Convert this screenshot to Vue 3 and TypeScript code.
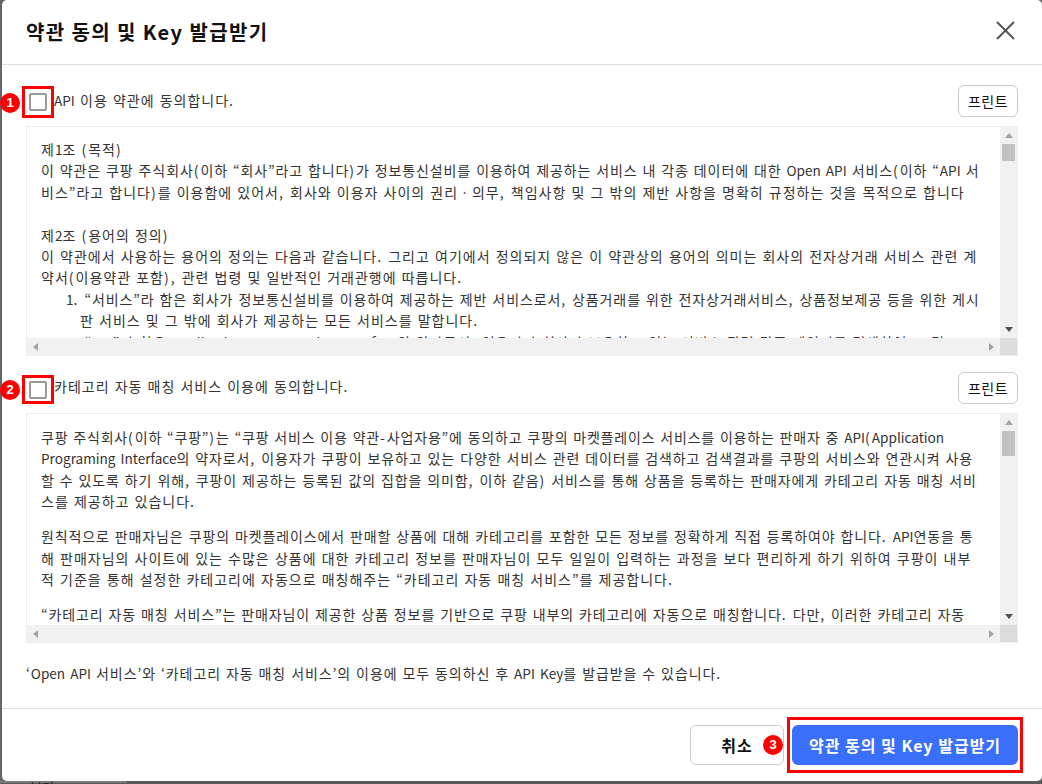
<script setup lang="ts">
interface Line { text: string; cls?: string }
interface Segment { text: string; kind: string }

function segments(text: string): Segment[] {
  return text
    .split(/([A-Za-z0-9]+|[(),.\-]+)/)
    .filter((t) => t.length > 0)
    .map((t) => ({
      text: t,
      kind: /^[A-Za-z0-9]/.test(t) ? 'lat' : /^[(),.\-]/.test(t) ? 'pun' : 'han',
    }))
}

const first: Line[] = [
  { text: '제1조 (목적)' },
  { text: '이 약관은 쿠팡 주식회사(이하 “회사”라고 합니다)가 정보통신설비를 이용하여 제공하는 서비스 내 각종 데이터에 대한 Open API 서비스(이하 “API 서', cls: 'tight' },
  { text: '비스”라고 합니다)를 이용함에 있어서, 회사와 이용자 사이의 권리ㆍ의무, 책임사항 및 그 밖의 제반 사항을 명확히 규정하는 것을 목적으로 합니다' },
  { text: '\u00a0' },
  { text: '제2조 (용어의 정의)' },
  { text: '이 약관에서 사용하는 용어의 정의는 다음과 같습니다. 그리고 여기에서 정의되지 않은 이 약관상의 용어의 의미는 회사의 전자상거래 서비스 관련 계' },
  { text: '약서(이용약관 포함), 관련 법령 및 일반적인 거래관행에 따릅니다.' },
  { text: '1. “서비스”라 함은 회사가 정보통신설비를 이용하여 제공하는 제반 서비스로서, 상품거래를 위한 전자상거래서비스, 상품정보제공 등을 위한 게시', cls: 'item tight' },
  { text: '판 서비스 및 그 밖에 회사가 제공하는 모든 서비스를 말합니다.', cls: 'item-cont' },
  { text: '2. “API”라 함은 Application Programming Interface의 약자로서, 이용자가 회사가 보유하고 있는 서비스 관련 각종 데이터를 검색하여 그 결', cls: 'item tight' },
]
const second: Line[] = [
  { text: '쿠팡 주식회사(이하 “쿠팡”)는 “쿠팡 서비스 이용 약관-사업자용”에 동의하고 쿠팡의 마켓플레이스 서비스를 이용하는 판매자 중 API(Application', cls: 'tighter' },
  { text: 'Programing Interface의 약자로서, 이용자가 쿠팡이 보유하고 있는 다양한 서비스 관련 데이터를 검색하고 검색결과를 쿠팡의 서비스와 연관시켜 사용', cls: 'tight' },
  { text: '할 수 있도록 하기 위해, 쿠팡이 제공하는 등록된 값의 집합을 의미함, 이하 같음) 서비스를 통해 상품을 등록하는 판매자에게 카테고리 자동 매칭 서비', cls: 'tight' },
  { text: '스를 제공하고 있습니다.' },
  { text: '원칙적으로 판매자님은 쿠팡의 마켓플레이스에서 판매할 상품에 대해 카테고리를 포함한 모든 정보를 정확하게 직접 등록하여야 합니다. API연동을 통', cls: 'para tight' },
  { text: '해 판매자님의 사이트에 있는 수많은 상품에 대한 카테고리 정보를 판매자님이 모두 일일이 입력하는 과정을 보다 편리하게 하기 위하여 쿠팡이 내부' },
  { text: '적 기준을 통해 설정한 카테고리에 자동으로 매칭해주는 “카테고리 자동 매칭 서비스”를 제공합니다.' },
  { text: '“카테고리 자동 매칭 서비스”는 판매자님이 제공한 상품 정보를 기반으로 쿠팡 내부의 카테고리에 자동으로 매칭합니다. 다만, 이러한 카테고리 자동', cls: 'para tight' },
]
const sections = [
  { n: 1, label: 'API 이용 약관에 동의합니다.', lines: first, thumb: 'thumb-a' },
  { n: 2, label: '카테고리 자동 매칭 서비스 이용에 동의합니다.', lines: second, thumb: 'thumb-b' },
]
const note = '‘Open API 서비스’와 ‘카테고리 자동 매칭 서비스’의 이용에 모두 동의하신 후 API Key를 발급받을 수 있습니다.'
</script>

<template>
  <div class="stage">
    <div class="modal">
      <header class="head">
        <h1 class="title">약관 동의 및 Key 발급받기</h1>
        <svg class="close" width="19" height="19" viewBox="0 0 19 19" aria-label="닫기">
          <path d="M1 1 L18 18 M18 1 L1 18" stroke="#555" stroke-width="2" fill="none" />
        </svg>
      </header>
      <div class="body">
        <section v-for="s in sections" :key="s.n" class="term">
          <div class="term-head">
            <span class="badge badge-left">{{ s.n }}</span>
            <span class="mark" :class="'mark-' + s.n"><span class="check"></span></span>
            <span class="label" :class="'label-' + s.n"><span v-for="(g, i) in segments(s.label)" :key="i" :class="g.kind">{{ g.text }}</span></span>
            <button class="print">프린트</button>
          </div>
          <div class="box">
            <div class="content" :class="'content-' + s.n">
              <div v-for="(l, i) in s.lines" :key="i" class="line" :class="l.cls"><span v-for="(g, j) in segments(l.text)" :key="j" :class="g.kind">{{ g.text }}</span></div>
            </div>
            <div class="vbar">
              <span class="arrow up"></span>
              <span class="thumb" :class="s.thumb"></span>
              <span class="grow"></span>
              <span class="arrow down"></span>
            </div>
            <div class="hbar">
              <span class="arrow left"></span>
              <span class="grow"></span>
              <span class="arrow right"></span>
            </div>
            <div class="corner"></div>
          </div>
        </section>
        <p class="note"><span v-for="(g, i) in segments(note)" :key="i" :class="g.kind">{{ g.text }}</span></p>
      </div>
      <footer class="foot">
        <button class="cancel">취소</button>
        <span class="badge badge-foot">3</span>
        <span class="mark-submit"><button class="submit">약관 동의 및 Key 발급받기</button></span>
      </footer>
    </div>
    <div class="behind">
      <div class="behind-left"><span class="behind-text">보기</span></div>
    </div>
  </div>
</template>

<style>
html, body { margin: 0; padding: 0; background: #666; }
</style>

<style scoped>
.stage {
  width: 1042px;
  height: 784px;
  overflow: hidden;
  background: #666;
  padding-left: 2px;
  box-sizing: border-box;
  font-family: "Noto Sans CJK KR", "Noto Sans", sans-serif;
  color: #333;
}
.modal {
  height: 781px;
  background: #fff;
  border-radius: 5px;
  display: flex;
  flex-direction: column;
  box-sizing: border-box;
  position: relative;
}
.behind { height: 3px; margin-left: -2px; overflow: hidden; background: #585858; }
.behind-left { width: 127px; height: 3px; background: #7b7b7b; padding-left: 30px; box-sizing: border-box; }
.behind-text { display: block; font-size: 13px; line-height: 13px; color: #222; margin-top: -1px; }
.head {
  height: 65px;
  flex: none;
  box-sizing: border-box;
  border-bottom: 1px solid #dedede;
  display: flex;
  align-items: center;
  justify-content: space-between;
  padding: 0 27px 4px 24px;
}
.title { margin: 4px 0 0; font-size: 20px; font-weight: 700; color: #111; line-height: 26px; letter-spacing: 1.4px; }
.close { display: block; }
.body { flex: 1; padding: 20px 24px 0 24px; min-height: 0; }
.term { margin-bottom: 16px; }
.term-head {
  height: 32px;
  display: flex;
  align-items: center;
  position: relative;
  margin-bottom: 9px;
}
.badge {
  width: 20px;
  height: 20px;
  border-radius: 50%;
  background: #f00;
  color: #fff;
  font: 700 13px/20px "Liberation Sans", sans-serif;
  text-align: center;
  position: absolute;
}
.badge-left { left: -26px; top: 8px; }
.mark {
  width: 32px;
  box-sizing: border-box;
  border: 3px solid #f00;
  display: flex;
  align-items: center;
  justify-content: center;
  margin-left: -4px;
  flex: none;
}
.mark-1 { height: 32px; margin-top: 1px; }
.mark-2 { height: 29px; margin-top: 3px; }
.check { width: 18px; height: 18px; box-sizing: border-box; border: 2px solid #999; border-radius: 2px; background: #fff; }
.label { font-size: 14px; line-height: 20px; letter-spacing: 1px; word-spacing: 1px; color: #333; flex: 1; }
.label-1 { margin-top: -3px; }
.label-2 { margin-top: -5px; }
.print {
  width: 60px;
  height: 32px;
  box-sizing: border-box;
  background: #fff;
  border: 1px solid #ccc;
  border-radius: 6px;
  font: 400 14px "Noto Sans CJK KR", sans-serif;
  letter-spacing: 0.5px;
  color: #111;
  padding: 0;
}
.box {
  height: 230px;
  box-sizing: border-box;
  border: 1px solid #eee;
  display: grid;
  grid-template-columns: minmax(0, 1fr) 17px;
  grid-template-rows: minmax(0, 1fr) 17px;
  width: 992px;
}
.content { overflow: hidden; padding: 12px 0 0 14px; min-width: 0; }
.content-2 { padding-top: 13px; }
.line { font-size: 14px; line-height: 21.4px; letter-spacing: 1px; word-spacing: 1px; white-space: nowrap; color: #333; }
.tight { letter-spacing: 0.88px; }
.tighter { letter-spacing: 0.8px; }
.lat { letter-spacing: 0; font-size: 13.6px; }
.pun { letter-spacing: 2px; }
.item { padding-left: 25px; }
.item-cont { padding-left: 39px; }
.para { margin-top: 13.6px; }
.vbar { background: #f1f1f1; display: flex; flex-direction: column; align-items: center; padding: 6px 0; box-sizing: border-box; }
.hbar { background: #f1f1f1; display: flex; align-items: center; padding: 0 6px; box-sizing: border-box; }
.corner { background: #dcdcdc; }
.grow { flex: 1; }
.thumb { width: 13px; background: #c1c1c1; margin-top: 6px; }
.thumb-a { height: 17px; }
.thumb-b { height: 25px; }
.arrow { width: 0; height: 0; display: block; border-style: solid; border-color: transparent; }
.up { border-width: 0 4px 5px; border-bottom-color: #a3a3a3; }
.down { border-width: 5px 4px 0; border-top-color: #505050; }
.left { border-width: 4px 5px 4px 0; border-right-color: #a3a3a3; }
.right { border-width: 4px 0 4px 5px; border-left-color: #a3a3a3; }
.note { margin: 20px 0 0; font-size: 14px; line-height: 20px; letter-spacing: 0.9px; word-spacing: 1px; color: #333; }
.foot {
  height: 73px;
  flex: none;
  border-top: 1px solid #dedede;
  box-sizing: border-box;
  display: flex;
  align-items: center;
  justify-content: flex-end;
  padding: 0 19px 0 0;
  position: relative;
}
.cancel {
  width: 94px;
  height: 40px;
  box-sizing: border-box;
  background: #fff;
  border: 1px solid #ccc;
  border-radius: 6px;
  font: 700 16px "Noto Sans CJK KR", sans-serif;
  letter-spacing: 1px;
  color: #111;
  padding: 0;
  margin-right: 3px;
}
.badge-foot { left: 761px; top: 26px; }
.mark-submit {
  width: 236px;
  height: 56px;
  box-sizing: border-box;
  border: 3px solid #f00;
  display: flex;
  align-items: center;
  justify-content: center;
}
.submit {
  width: 226px;
  height: 40px;
  border: 0;
  border-radius: 6px;
  background: #3a6ffb;
  color: #fff;
  font: 700 16px "Noto Sans CJK KR", sans-serif;
  letter-spacing: 1px;
  padding: 0;
}
</style>
